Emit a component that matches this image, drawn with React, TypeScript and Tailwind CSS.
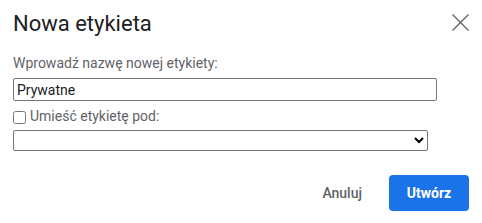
import React from "react";

export default function App() {
  return (
    <div className="w-[482px] h-[223px] bg-white overflow-hidden px-[13px] font-['Roboto',sans-serif]">
      <div className="flex items-start justify-between pt-[10px]">
        <h1 className="text-[22px] leading-[28px] text-[#202124] font-normal">Nowa etykieta</h1>
        <button className="mt-[4px] w-[17px] h-[17px] text-[#5f6368]" aria-label="Zamknij">
          <svg width="17" height="17" viewBox="0 0 17 17" fill="none" stroke="currentColor" strokeWidth="1.3">
            <line x1="0.5" y1="0.5" x2="16.5" y2="16.5" />
            <line x1="16.5" y1="0.5" x2="0.5" y2="16.5" />
          </svg>
        </button>
      </div>
      <div className="mt-[15px] text-[14px] leading-[20px] text-[#5f6368]">Wprowadź nazwę nowej etykiety:</div>
      <input
        type="text"
        defaultValue="Prywatne"
        className="mt-[5px] block w-[424px] h-[23px] border border-[#767676] rounded-[2px] px-[3px] text-[14px] text-[#202124] outline-none"
      />
      <label className="mt-[5px] flex items-center gap-[4px] text-[14px] leading-[20px] text-[#5f6368]">
        <input type="checkbox" className="w-[13px] h-[13px] mt-[2px]" />
        <span>Umieść etykietę pod:</span>
      </label>
      <select className="mt-[4px] block w-[415px] h-[21px] border border-[#767676] rounded-[2px] text-[13px] text-black bg-white">
        <option value=""></option>
      </select>
      <div className="mt-[24px] flex justify-end items-center gap-[11px]">
        <button className="h-[36px] px-[16px] text-[14px] font-medium text-[#5f6368] rounded-[4px]">Anuluj</button>
        <button className="h-[36px] w-[80px] text-[14px] font-bold text-white bg-[#1a73e8] rounded-[4px]">Utwórz</button>
      </div>
    </div>
  );
}
